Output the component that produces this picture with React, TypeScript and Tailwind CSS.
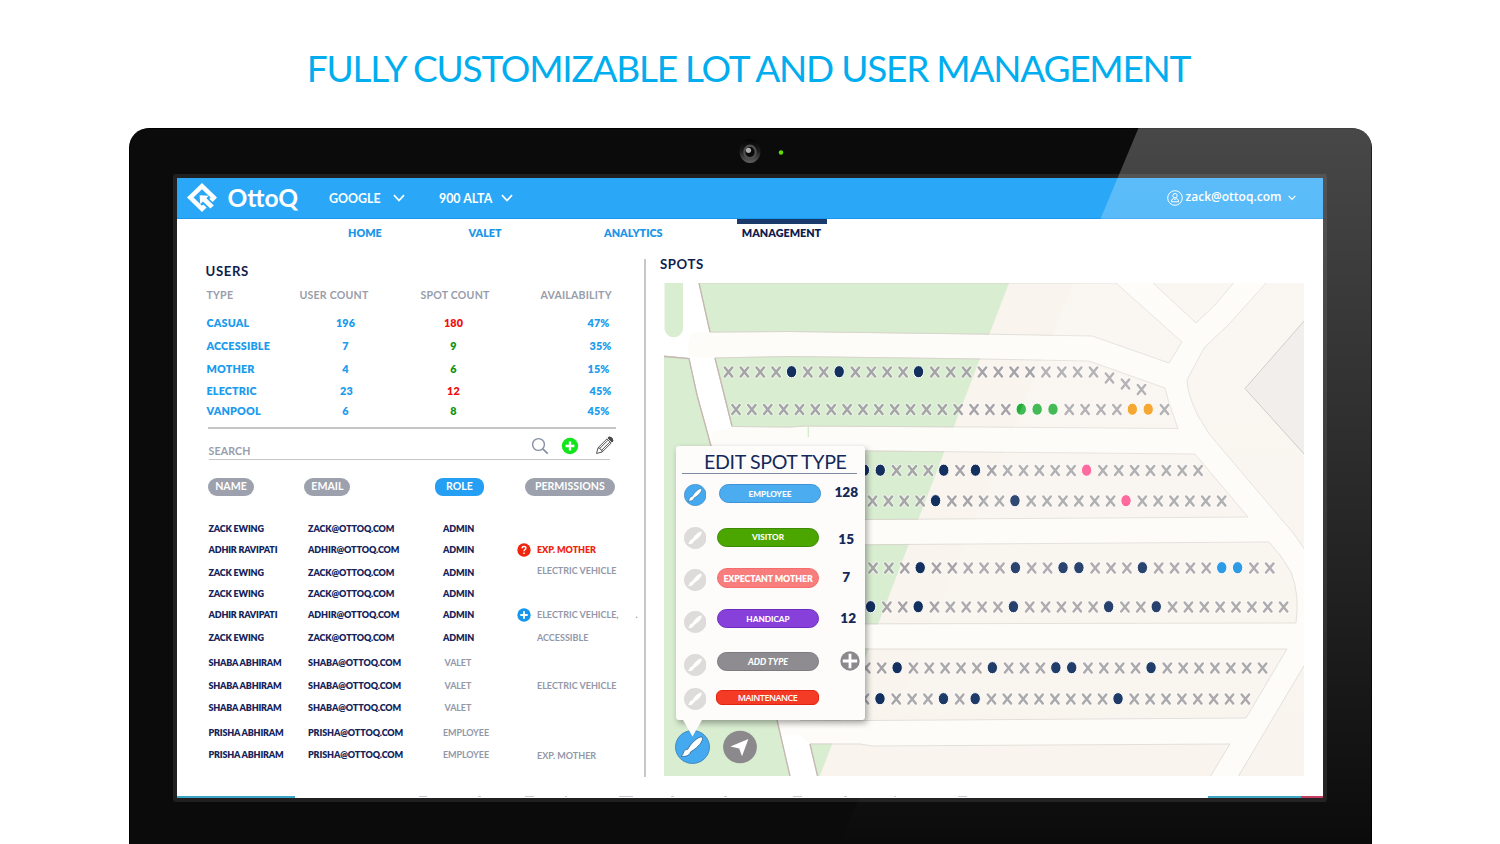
import React from "react";

const typeRows = [
  { type: "CASUAL", users: "196", spots: "180", pct: "47%", hot: true, cls: "mt-[8px]", pad: "pr-[7px]", up: "pl-0" },
  { type: "ACCESSIBLE", users: "7", spots: "9", pct: "35%", hot: false, cls: "mt-[5px]", pad: "pr-[5px]", up: "pl-0" },
  { type: "MOTHER", users: "4", spots: "6", pct: "15%", hot: false, cls: "mt-[4.5px]", pad: "pr-[7px]", up: "pl-0" },
  { type: "ELECTRIC", users: "23", spots: "12", pct: "45%", hot: true, cls: "mt-[4.5px]", pad: "pr-[5px]", up: "pl-[2px]" },
  { type: "VANPOOL", users: "6", spots: "8", pct: "45%", hot: false, cls: "mt-[1.5px]", pad: "pr-[7px]", up: "pl-0" },
];

type Person = { name: string; email: string; role: string; perm?: string; icon?: "ask" | "add"; cls: string; permCls?: string };

const people: Person[] = [
  { name: "ZACK EWING", email: "ZACK@OTTOQ.COM", role: "ADMIN", cls: "mt-[26px]" },
  { name: "ADHIR RAVIPATI", email: "ADHIR@OTTOQ.COM", role: "ADMIN", perm: "EXP. MOTHER", icon: "ask", cls: "mt-[7px]" },
  { name: "ZACK EWING", email: "ZACK@OTTOQ.COM", role: "ADMIN", perm: "ELECTRIC VEHICLE", cls: "mt-[9.5px]", permCls: "pb-[4px]" },
  { name: "ZACK EWING", email: "ZACK@OTTOQ.COM", role: "ADMIN", cls: "mt-[6.5px]" },
  { name: "ADHIR RAVIPATI", email: "ADHIR@OTTOQ.COM", role: "ADMIN", perm: "ELECTRIC VEHICLE,", icon: "add", cls: "mt-[7px]" },
  { name: "ZACK EWING", email: "ZACK@OTTOQ.COM", role: "ADMIN", perm: "ACCESSIBLE", cls: "mt-[9px]" },
  { name: "SHABA ABHIRAM", email: "SHABA@OTTOQ.COM", role: "VALET", cls: "mt-[11px]" },
  { name: "SHABA ABHIRAM", email: "SHABA@OTTOQ.COM", role: "VALET", perm: "ELECTRIC VEHICLE", cls: "mt-[9px]" },
  { name: "SHABA ABHIRAM", email: "SHABA@OTTOQ.COM", role: "VALET", cls: "mt-[8px]" },
  { name: "PRISHA ABHIRAM", email: "PRISHA@OTTOQ.COM", role: "EMPLOYEE", cls: "mt-[11px]" },
  { name: "PRISHA ABHIRAM", email: "PRISHA@OTTOQ.COM", role: "EMPLOYEE", perm: "EXP. MOTHER", cls: "mt-[8px]", permCls: "pt-[2px]" },
];

const spotTypes = [
  { label: "EMPLOYEE", count: "128", row: "mt-[10px]", pill: "ml-[13px] mb-[3px] h-[19px] rounded-full bg-[#4badf0] border-[#3d93d6] text-[8.2px] font-black", num: "mb-[4px]" },
  { label: "VISITOR", count: "15", row: "mt-[20.5px]", pill: "ml-[11px] mr-[2px] mb-px h-[19px] rounded-full bg-[#4ba601] border-[#3b8a00] text-[8.2px] font-black", num: "mt-[4px]" },
  { label: "EXPECTANT MOTHER", count: "7", row: "mt-[20px]", pill: "ml-[11px] mr-[2px] mb-[3px] h-[20px] rounded-full bg-[#f87d7d] border-[#f56c6c] text-[8.8px] font-extrabold tracking-[-0.1px]", num: "mb-[3px]" },
  { label: "HANDICAP", count: "12", row: "mt-[20.5px]", pill: "ml-[11px] mr-[2px] mb-[7px] h-[19px] rounded-full bg-[#8740da] border-[#6d2bc0] text-[8.2px] font-black", num: "mb-[7px] pl-[4px]" },
  { label: "ADD TYPE", count: "", row: "mt-[20.5px]", pill: "ml-[11px] mr-[2px] mb-[7px] h-[19px] rounded-full bg-[#8e8c90] border-[#7d7b7f] text-[8.8px] font-black italic", num: "mb-[7px] pl-[7px]" },
  { label: "MAINTENANCE", count: null, row: "mt-[12px]", pill: "ml-[10px] mr-[2px] mb-[3px] h-[15px] w-[103px] rounded-[6px] bg-[#f43b25] border-[#e32410] font-['Open_Sans',sans-serif] text-[9px] font-semibold tracking-[-0.5px]", num: "" },
];

/* x = open spot, D = employee, G = visitor, O = handicap, P = expectant mother, B = electric */
const PITCH = 15.87;
const lotRows = [
  { x: 728.5, y: 372, cells: "xxxxDxxDxxxxDxxxxxxxxxxx" },
  { x: 736, y: 409.5, cells: "xxxxxxxxxxxxxxxxxxGGGxxxxOOx" },
  { x: 864.8, y: 470.5, cells: "DDxxxDxDxxxxxxPxxxxxxx" },
  { x: 872.5, y: 501, cells: "xxxxDxxxxDxxxxxxPxxxxxx" },
  { x: 873, y: 568, cells: "xxxDxxxxxDxxDDxxxDxxxxBBxx" },
  { x: 871, y: 607, cells: "DxxDxxxxxDxxxxxDxxDxxxxxxxx" },
  { x: 865.8, y: 668, cells: "xxDxxxxxDxxxDDxxxxDxxxxxxx" },
  { x: 864.5, y: 699, cells: "xDxxxDxDxxxxxxxxDxxxxxxxx" },
];
const bendSpots = [
  [1109.5, 378],
  [1125.5, 384],
  [1141.5, 389.5],
];
const dotColors: Record<string, string> = { D: "#13305f", G: "#23ae38", O: "#f4980f", P: "#ff5591", B: "#1790e2" };

const blocks = [
  "M699 283 L710 332 L790 331.5 L980 334 L1092 336 L1169 363 L1182 342 L1116 283 Z",
  "M715 358 L790 356.5 L980 359 L1089 361 L1165 388 L1169 403 L1178 428.5 L980 427 L805 426 L790 427 L732 426.5 Z",
  "M737 450 L866 451 L1195 454 L1248 517 L1100 518 L866 519.5 L755 520 Z",
  "M762 546 L900 544.5 L1269 542 L1280 555 L1291 572 Q1300 595 1296 623 L780 624 Z",
  "M790 649 L1287 649 L1246 718 L866 720.5 L800 720 Z",
  "M810 744 L860 744 L872 746 L1230 744 L1210 777 L818 777 Z",
  "M664 356 L689 358.5 L697 395 L711 446 L777 720 L790 777 L660 777 L660 356 Z",
];
const rightBlocks = [
  "M1152 282 L1196 323 L1215 305 L1234.5 282 Z",
  "M1267 282 L1230 323 L1204 348 L1187 380 Q1187 393 1198 416 L1210 435 L1294 534 L1305 550 L1305 282 Z",
  "M1305 664 L1238 777 L1305 777 Z",
];

function Cross({ x, y }: { x: number; y: number }) {
  const d = `M${x - 3.7} ${y - 4.5} L${x + 3.7} ${y + 4.5} M${x + 3.7} ${y - 4.5} L${x - 3.7} ${y + 4.5}`;
  return (
    <g strokeLinecap="round">
      <path d={d} stroke="#fff" strokeOpacity=".45" strokeWidth="4.6" />
      <path d={d} stroke="#a6a4a8" strokeWidth="2.5" />
    </g>
  );
}

function LotMap() {
  return (
    <svg viewBox="664 283 640 493" className="block h-[493px] w-[640px]" fill="none">
      <defs>
        <clipPath id="park">
          <path d="M600 283 H1009 L819.5 777 H600 Z" />
        </clipPath>
      </defs>
      <rect x="664" y="283" width="640" height="493" fill="#fefcf8" />
      <path d="M664 283 H699 L710 332 L692 333 Q685 345 690 358 L664 356 Z" fill="#fff" />
      <path d="M715 358 L732 427 L712 432 L711 446 L697 395 L689 357 Z" fill="#fff" />
      <path d="M777 735 L800 735 L810 744 L818 777 H790 Z" fill="#fff" />
      <path d="M664.5 283 H683 V329 A9.3 9.3 0 0 1 664.5 329 Z" fill="#d9edd1" />
      {blocks.map((d) => (
        <path key={d} d={d} fill="#f9f4ee" stroke="#e2dfda" strokeWidth="1" />
      ))}
      <g clipPath="url(#park)">
        {blocks.map((d) => (
          <path key={d} d={d} fill="#d9edd1" stroke="#d8d6cc" strokeWidth="1" />
        ))}
      </g>
      {rightBlocks.map((d) => (
        <path key={d} d={d} fill="#f9f4ee" stroke="#e2dfda" strokeWidth="1" />
      ))}
      <path d="M1305 320 L1245 388.5 L1305 455 Z" fill="#efebe8" stroke="#c6c3c1" />
      <path
        d="M699 283 L710 332 M715 358 L732 426 M664 356.5 L689 358.5 L697 395 L711 446 M777 720 L790 776 M810 744 L817.5 776"
        stroke="#c6b8b0"
        strokeWidth="1.3"
      />
      <path d="M808.3 426 V437" stroke="#d0ecca" strokeWidth="1.3" />
      {lotRows.map((r) =>
        r.cells.split("").map((c, i) => {
          const x = r.x + i * PITCH;
          return c === "x" ? (
            <Cross key={`${r.y}-${i}`} x={x} y={r.y} />
          ) : (
            <ellipse key={`${r.y}-${i}`} cx={x - 0.4} cy={r.y - 0.3} rx="5.2" ry="6.1" fill={dotColors[c]} stroke="#fff" strokeWidth="1" />
          );
        }),
      )}
      {bendSpots.map(([x, y]) => (
        <Cross key={x} x={x} y={y} />
      ))}
    </svg>
  );
}

function Brush({ active, className }: { active?: boolean; className: string }) {
  return (
    <svg viewBox="0 0 22 21" preserveAspectRatio="none" className={className}>
      <ellipse cx="11" cy="10.5" rx="10.7" ry="10.2" fill={active ? "#44a9ee" : "#dedcda"} stroke={active ? "#3c7fb5" : "#d6d4d2"} strokeWidth=".5" />
      <path
        d="M17 4.3 C17.9 5.6 16.6 7.7 14.9 9.6 C13.2 11.4 11.4 12.5 9.7 13.6 C9.5 15.2 7.4 16.6 3.9 16.3 C5 15.6 5 14.6 5.5 13.5 C6 12.4 7 11.9 8 11.9 C9 10.1 10.4 8.2 12.3 6.6 C13.9 5.2 15.7 4.1 17 4.3 Z"
        fill="#fff"
        stroke={active ? "#2d567d" : "none"}
        strokeWidth=".45"
      />
    </svg>
  );
}

function Chevron({ className }: { className: string }) {
  return (
    <svg viewBox="0 0 12 8" className={className} fill="none" stroke="#fff">
      <path d="M1 1.2 L6 6.5 L11 1.2" strokeWidth="1.7" />
    </svg>
  );
}

function Logo() {
  return (
    <svg viewBox="0 0 30 30" className="h-[30px] w-[30px]">
      <path
        d="M15 0 L30 14.5 L25.7 18.9 L22.4 15.9 L23.6 14.5 L15 6.2 L6.5 14.5 L15 22.8 L16.4 21.5 L19.6 24.6 L15 29 L0 14.5 Z"
        fill="#fff"
      />
      <path d="M12.6 12.3 L21.6 12.7 L19.4 15.2 L26.8 22.4 L23.3 25.6 L16 18.4 L13.2 21 Z" fill="#fff" />
    </svg>
  );
}

function SpotPopover() {
  return (
    <div className="absolute left-[12.5px] top-[163px] h-[274px] w-[189px] rounded-[3px] bg-[#fefcfb] shadow-[2px_3px_6px_rgba(0,0,0,0.35)]">
      <div className="ml-[6px] mr-[8px] flex h-[28px] items-end border-b border-[#7f89a6] pl-[22px]">
        <h3 className="whitespace-nowrap text-[19.6px] leading-[23px] tracking-[-0.35px] text-[#14295a]">EDIT SPOT TYPE</h3>
      </div>
      {spotTypes.map((t, i) => (
        <div key={t.label} className={`flex h-[22px] items-center pl-[7.5px] ${t.row}`}>
          <Brush active={i === 0} className="h-[22px] w-[22.5px] shrink-0" />
          <div className={`flex w-[102px] shrink-0 items-center justify-center whitespace-nowrap border pt-px text-white ${t.pill}`}>{t.label}</div>
          {t.count !== null && (
            <div className={`flex w-[50.5px] shrink-0 justify-center text-[13.6px] font-extrabold leading-none text-[#14295a] ${t.num}`}>
              {t.count || (
                <svg viewBox="0 0 20 20" className="h-[20px] w-[20px]">
                  <circle cx="10" cy="10" r="9.7" fill="#8b898c" />
                  <path d="M10 2.8 V17.2 M2.8 10 H17.2" stroke="#fff" strokeWidth="2.8" />
                </svg>
              )}
            </div>
          )}
        </div>
      ))}
      <svg viewBox="0 0 20 18" className="absolute left-[6px] top-[273px] h-[18px] w-[21px]">
        <path d="M0 0 H20 L10 17.5 Z" fill="#fefcfb" />
      </svg>
    </div>
  );
}

function UsersPanel() {
  return (
    <section className="flex w-[467px] flex-col pl-[29px]">
      <h2 className="mt-[15px] flex h-[19px] items-center text-[13.2px] font-bold tracking-[0.6px] text-[#101d4f]">USERS</h2>
      <div className="grid h-[27px] grid-cols-[93px_121px_120px_80px] items-center whitespace-nowrap pl-[1px] pt-[2px] text-[10.6px] font-bold tracking-[0.2px] text-[#989dab]">
        <span>TYPE</span>
        <span>USER COUNT</span>
        <span>SPOT COUNT</span>
        <span>AVAILABILITY</span>
      </div>
      <div className="-mt-[1.5px]">
        {typeRows.map((r) => (
          <div key={r.type} className={`grid h-[18px] grid-cols-[93px_92px_124px_101px] items-center pl-[1px] text-[10.8px] font-extrabold tracking-[0.15px] text-[#1b9bee] ${r.cls}`}>
            <span>{r.type}</span>
            <span className={`text-center ${r.up}`}>{r.users}</span>
            <span className={r.hot ? "text-center text-[#f01010]" : "text-center text-[#12930f]"}>{r.spots}</span>
            <span className={`text-right ${r.pad}`}>{r.pct}</span>
          </div>
        ))}
      </div>
      <div className="ml-[2px] mt-[7px] h-[1.5px] w-[408px] shrink-0 bg-[#c6c6c8]" />
      <div className="ml-[3px] flex h-[31px] w-[401px] shrink-0 items-center border-b-[1.5px] border-[#c6c6c8] pt-[4px]">
        <span className="w-[322px] shrink-0 pt-[11px] text-[10.6px] font-bold leading-[13px] tracking-[0.15px] text-[#989dab]">SEARCH</span>
        <svg viewBox="0 0 18 18" className="h-[18px] w-[18px] shrink-0" fill="none" stroke="#8790a3" strokeWidth="1.4">
          <circle cx="7.5" cy="7.5" r="5.9" />
          <path d="M11.8 11.8 L16.7 16.7" strokeWidth="1.8" />
        </svg>
        <svg viewBox="0 0 18 18" className="ml-[12px] h-[18px] w-[18px] shrink-0">
          <circle cx="9" cy="9" r="8.2" fill="#12e51c" />
          <path d="M9 4.6 V13.4 M4.6 9 H13.4" stroke="#fff" strokeWidth="2.3" />
        </svg>
        <svg viewBox="0 0 20 20" className="ml-[16px] h-[19px] w-[19px] shrink-0" fill="none" stroke="#4b4b4f" strokeWidth="1" strokeLinejoin="round">
          <path d="M1.6 18.4 L3.2 12.4 L12.6 3 L17 7.4 L7.6 16.8 Z M3.2 12.4 L5.2 12.9 L5.8 14.3 L7.2 14.8 L7.6 16.8 M5.2 12.9 L13.6 4.5 M7.2 14.8 L15.6 6.4" />
          <path d="M13.6 2 L14.8 .9 Q19 1.2 19 5.2 L17.9 6.4 Z" fill="#4b4b4f" />
        </svg>
      </div>
      <div className="ml-[2.5px] mt-[18.5px] flex h-[17.5px] w-[407px] shrink-0 text-[10.6px] font-bold leading-[17px] text-white">
        <span className="w-[46px] rounded-full bg-[#9ca1ad] text-center">NAME</span>
        <span className="ml-[50.5px] w-[46px] rounded-full bg-[#9ca1ad] text-center">EMAIL</span>
        <span className="ml-[85px] w-[48.5px] rounded-[8px] bg-[#259ff4] text-center">ROLE</span>
        <span className="ml-[41px] w-[90.5px] rounded-full bg-[#9ca1ad] text-center">PERMISSIONS</span>
      </div>
      {people.map((p, i) => (
        <div
          key={i}
          className={`ml-[3px] grid h-[14px] shrink-0 grid-cols-[99.5px_135px_74px_125px] grid-rows-[14px] items-center whitespace-nowrap text-[9px] font-extrabold leading-[14px] tracking-[-0.1px] text-[#14235a] ${p.cls}`}
        >
          <span className="tracking-[-0.18px]">{p.name}</span>
          <span>{p.email}</span>
          {p.role === "ADMIN" ? <span>ADMIN</span> : <span className={p.role === "VALET" ? "pl-[1.5px] font-bold text-[#9298a8]" : "font-bold text-[#9298a8]"}>{p.role}</span>}
          <span className={`flex items-center ${p.permCls ?? ""}`}>
            <span className="flex w-[20px] shrink-0">
              {p.icon && (
                <svg viewBox="0 0 14 14" className="h-[14px] w-[14px]">
                  <circle cx="7" cy="7" r="6.7" fill={p.icon === "ask" ? "#f0250e" : "#1398ee"} />
                  {p.icon === "ask" ? (
                    <path d="M5 5.3 Q5.1 3.5 7 3.5 Q8.9 3.5 8.9 5.1 Q8.9 6.1 7.9 6.7 Q7 7.2 7 8.2 M7 9.5 V10.9" stroke="#fff" strokeWidth="1.4" fill="none" />
                  ) : (
                    <path d="M7 3.3 V10.7 M3.3 7 H10.7" stroke="#fff" strokeWidth="1.8" />
                  )}
                </svg>
              )}
            </span>
            <span className={p.icon === "ask" ? "text-[#f0250e]" : "font-bold tracking-[0px] text-[#9298a8]"}>{p.perm}</span>
            {p.icon === "add" && <span className="ml-[17px] font-bold text-[#8f95a5]">.</span>}
          </span>
        </div>
      ))}
    </section>
  );
}

function SpotsPanel() {
  return (
    <section className="flex flex-col pl-[13px]">
      <h2 className="ml-[1.5px] mt-[8px] flex h-[19px] items-center text-[13.2px] font-bold tracking-[0.6px] text-[#101d4f]">SPOTS</h2>
      <div className="relative ml-[5px] mt-[9px] h-[493px] w-[640px]">
        <LotMap />
        <div className="absolute left-[11.5px] top-[447px] flex gap-[12.5px]">
          <Brush active className="h-[34px] w-[35px]" />
          <svg viewBox="0 0 34 34" className="h-[34px] w-[34px]">
            <ellipse cx="17" cy="17" rx="16.9" ry="16.3" fill="#8b898c" />
            <path d="M25.4 9 L19 26.2 L16.2 18.6 L7.4 16.4 Z" fill="#fff" />
          </svg>
        </div>
        <SpotPopover />
      </div>
    </section>
  );
}

const hiddenMarks = [
  "w-[8px] ml-[124px]",
  "w-[3px] ml-[51px]",
  "w-[9px] ml-[44px]",
  "w-[2px] ml-[31px]",
  "w-[14px] ml-[52px]",
  "w-[3px] ml-[38px]",
  "w-[3px] ml-[50px]",
  "w-[9px] ml-[66px]",
  "w-[3px] ml-[42px]",
  "w-[2px] ml-[47px]",
  "w-[9px] ml-[62px]",
];

export default function App() {
  return (
    <main className="flex h-[844px] w-[1500px] flex-col items-center overflow-hidden bg-white font-['Lato','Open_Sans',sans-serif]">
      <h1 className="flex h-[128px] shrink-0 items-center whitespace-nowrap pr-[3px] pt-[8px] text-[37px] tracking-[-1.24px] text-[#00aeef]">FULLY CUSTOMIZABLE LOT AND USER MANAGEMENT</h1>
      <div className="relative h-[716px] w-[1243px] shrink-0 rounded-t-[20px] border-x border-t border-[#000] bg-[#0b0b0b] px-[43px]">
        <div className="flex h-[45px] justify-center pl-[20px] pt-[9px]">
          <svg viewBox="0 0 28 28" className="h-[28px] w-[28px]">
            <defs>
              <linearGradient id="lens" x1="0" y1="0" x2="0" y2="1">
                <stop offset="0" stopColor="#030303" />
                <stop offset=".5" stopColor="#1c1c1c" />
                <stop offset="1" stopColor="#626262" />
              </linearGradient>
            </defs>
            <ellipse cx="14" cy="13" rx="10.5" ry="12" fill="url(#lens)" />
            <ellipse cx="14" cy="14" rx="6.8" ry="7.5" fill="#4e4e4e" />
            <ellipse cx="14" cy="14" rx="4.6" ry="5" fill="#0a0a0a" />
            <circle cx="12.5" cy="12.3" r="2.6" fill="#b0b0b0" />
          </svg>
          <svg viewBox="0 0 6 28" className="ml-[14.5px] h-[28px] w-[6px]">
            <circle cx="3" cy="14.5" r="2.2" fill="#5fe000" />
          </svg>
        </div>
        <div className="h-[628px] w-[1154px] rounded-[3px] border-[4px] border-[#211f20]">
          <div className="flex h-[620px] w-[1146px] flex-col bg-white">
            <header className="flex h-[41px] shrink-0 items-center border-b border-[#1798ee] bg-[#2aa8f7] text-white">
              <div className="mb-[1px] ml-[10px]">
                <Logo />
              </div>
              <span className="ml-[11px] w-[101.5px] text-[24.5px] font-bold leading-none">OttoQ</span>
              <span className="w-[64px] pt-[2px] text-[12.4px] font-bold">GOOGLE</span>
              <Chevron className="h-[8px] w-[12px]" />
              <span className="ml-[34px] w-[62px] pt-[2px] text-[12.4px] font-bold">900 ALTA</span>
              <Chevron className="h-[8px] w-[12px]" />
              <div className="ml-auto flex items-center pb-[1px] pr-[27px]">
                <svg viewBox="0 0 16 16" className="h-[16px] w-[16px]" fill="none" stroke="#fff" strokeWidth="1">
                  <circle cx="8" cy="8" r="7.3" />
                  <circle cx="8" cy="5.7" r="2.2" />
                  <path d="M4.3 11.8 Q4.3 8.9 6.7 8.6 L8 9.5 L9.3 8.6 Q11.7 8.9 11.7 11.8 Z" />
                </svg>
                <span className="ml-[2.5px] w-[102px] pb-px font-['Open_Sans',sans-serif] text-[12px] font-semibold leading-[16px]">zack@ottoq.com</span>
                <Chevron className="mt-[1px] h-[5.5px] w-[8px]" />
              </div>
            </header>
            <nav className="flex h-[28px] shrink-0 pl-[171.5px] text-[10.8px] font-extrabold leading-[28px] text-[#1b96e8]">
              <a className="w-[120.5px]">HOME</a>
              <a className="w-[135.5px]">VALET</a>
              <a className="w-[132.5px]">ANALYTICS</a>
              <a className="w-[90px] border-t-[5px] border-[#1a3a6b] text-center leading-[18px] text-[#101d4f]">MANAGEMENT</a>
            </nav>
            <div className="flex h-[549px] shrink-0">
              <UsersPanel />
              <div className="mt-[12px] h-[518px] w-[2px] bg-[#c8c8ca]" />
              <SpotsPanel />
            </div>
            <div className="flex h-[1.5px] shrink-0">
              <i className="w-[118px] bg-[#3aa5c4]" />
              {hiddenMarks.map((m) => (
                <i key={m} className={`h-px bg-[#c9cad6] ${m}`} />
              ))}
              <i className="ml-auto w-[93px] bg-[#3aa5c4]" />
              <i className="w-[22px] bg-[#c43c62]" />
            </div>
          </div>
        </div>
        <div className="pointer-events-none absolute -inset-px rounded-tr-[20px] bg-gradient-to-b from-white/25 to-white/0 [clip-path:polygon(1010px_0,1243px_0,1243px_716px,711px_716px)]" />
      </div>
    </main>
  );
}
